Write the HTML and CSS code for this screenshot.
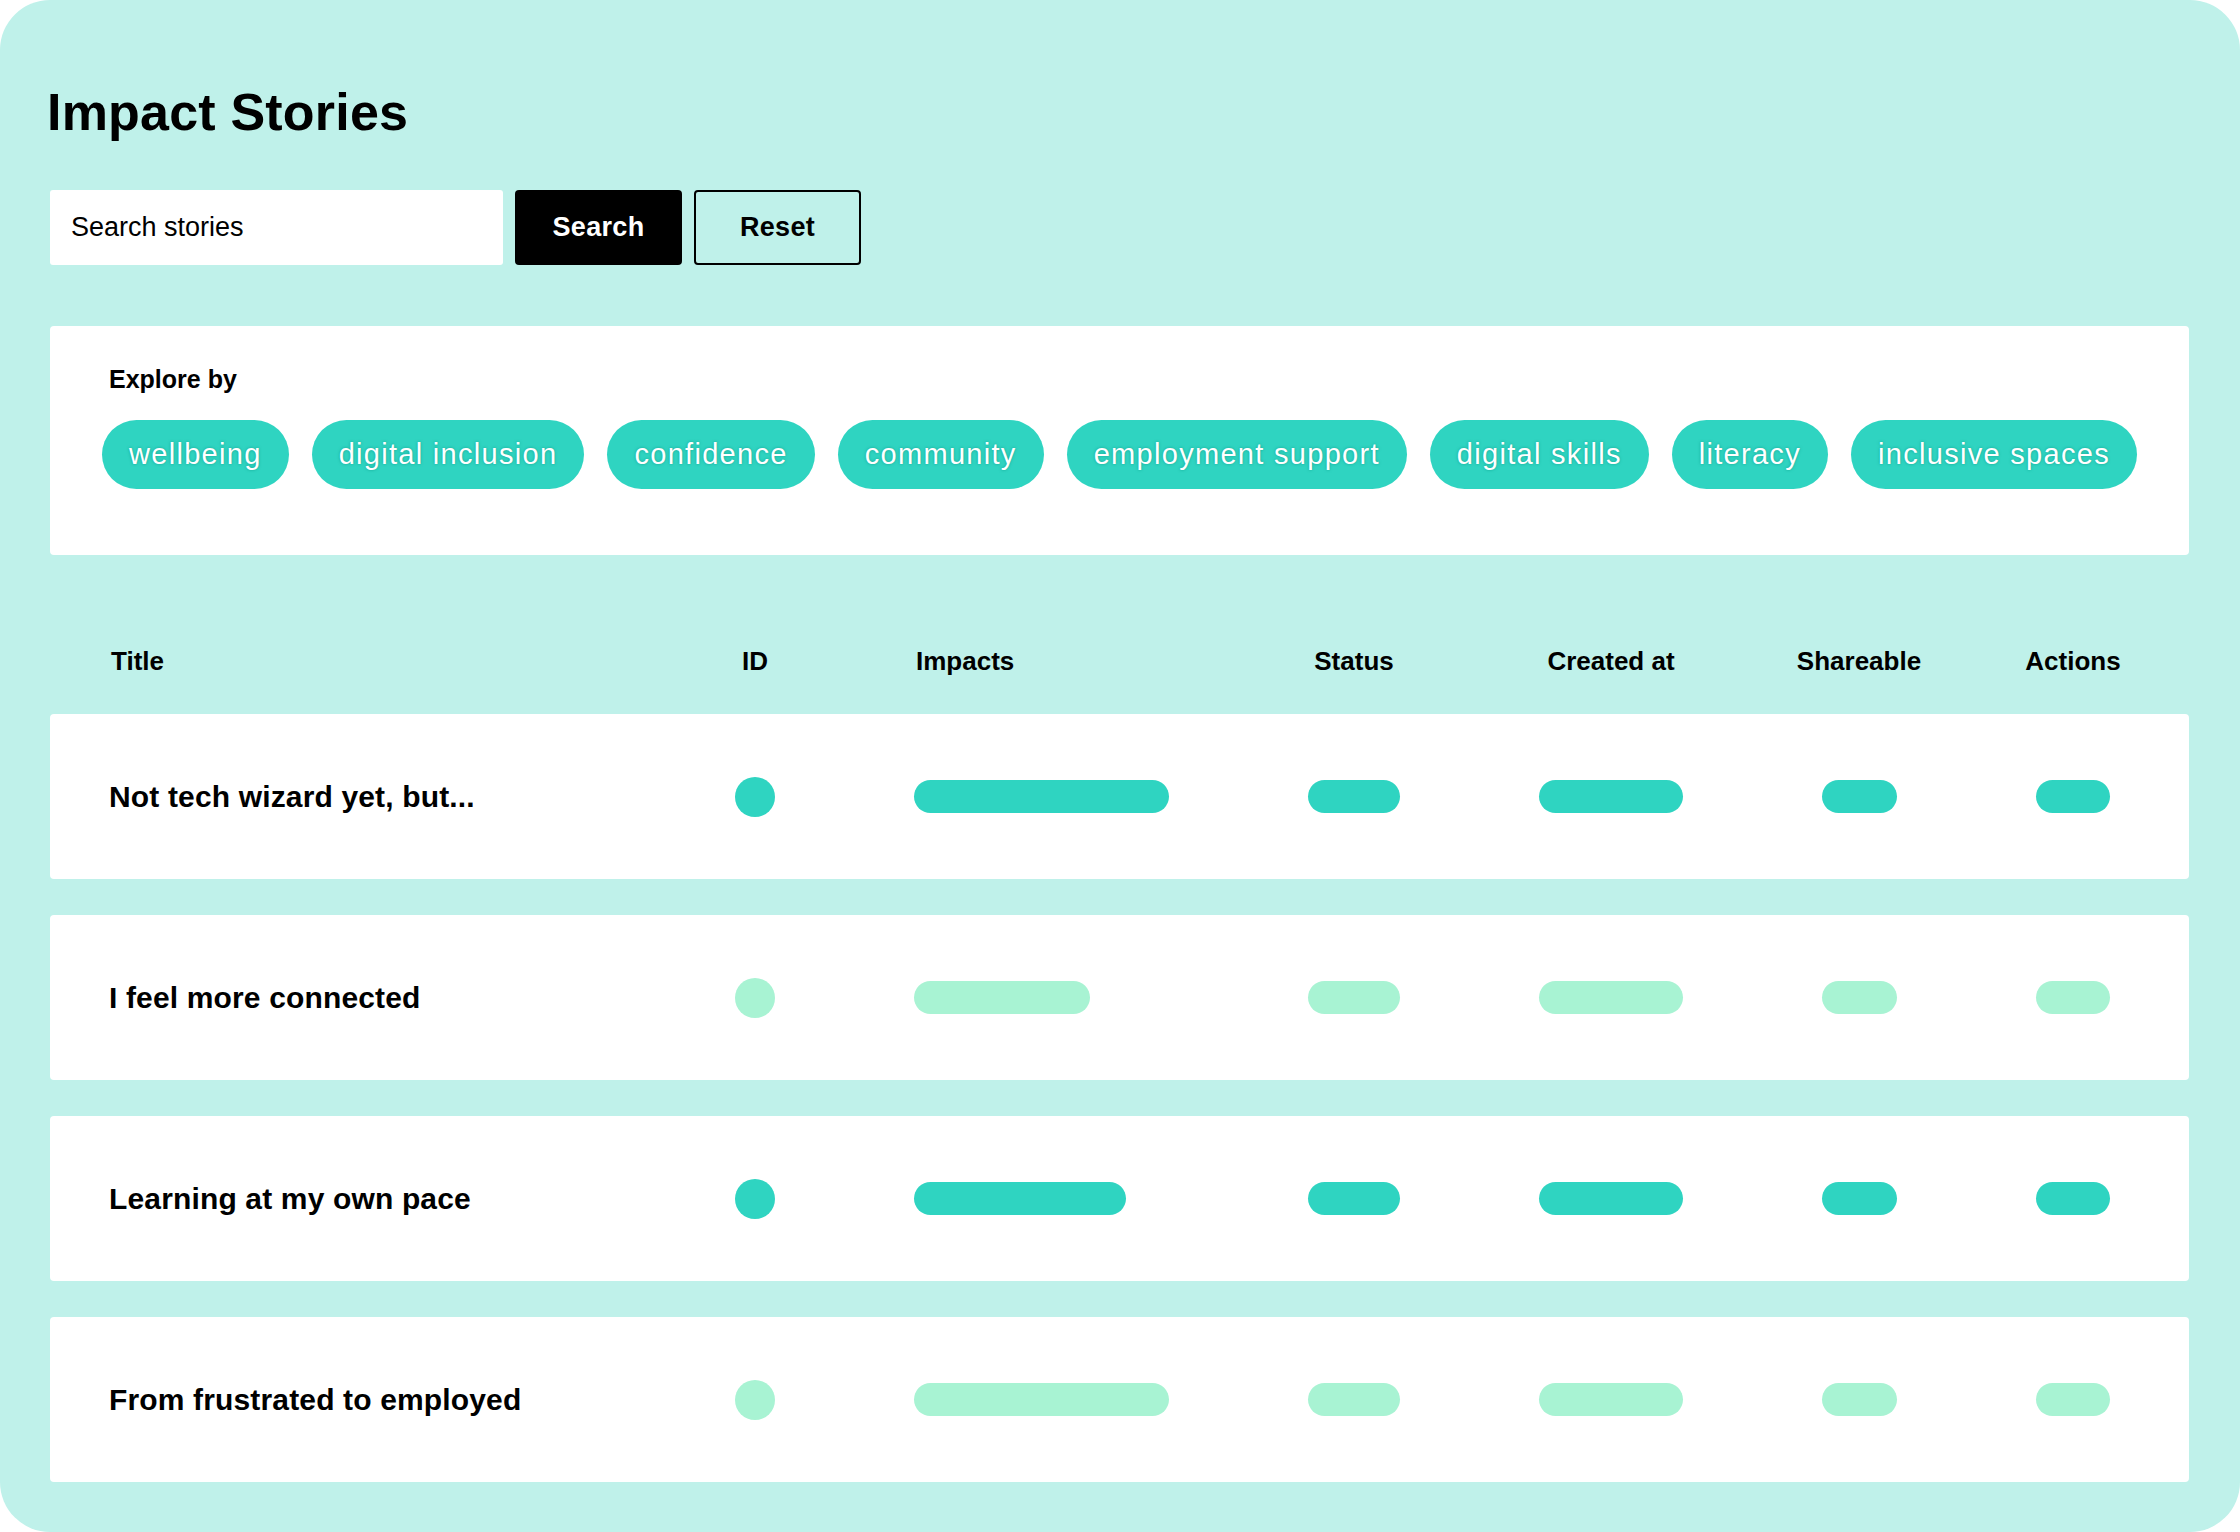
FILE: index.html
```html
<!DOCTYPE html>
<html lang="en">
<head>
<meta charset="utf-8">
<title>Impact Stories</title>
<link rel="stylesheet" href="styles.css">
</head>
<body>
<main class="page">
  <h1 class="page-title">Impact Stories</h1>

  <form class="search-bar">
    <input class="search-input" type="text" placeholder="Search stories">
    <button class="btn btn-primary" type="button">Search</button>
    <button class="btn btn-outline" type="button">Reset</button>
  </form>

  <section class="explore">
    <h2 class="explore-label">Explore by</h2>
    <div class="chips">
      <span class="chip">wellbeing</span>
      <span class="chip">digital inclusion</span>
      <span class="chip">confidence</span>
      <span class="chip">community</span>
      <span class="chip">employment support</span>
      <span class="chip">digital skills</span>
      <span class="chip">literacy</span>
      <span class="chip">inclusive spaces</span>
    </div>
  </section>

  <section class="stories">
    <div class="grid-row table-head">
      <div class="cell cell-title">Title</div>
      <div class="cell cell-center">ID</div>
      <div class="cell cell-impacts">Impacts</div>
      <div class="cell cell-center">Status</div>
      <div class="cell cell-center">Created at</div>
      <div class="cell cell-center">Shareable</div>
      <div class="cell cell-center">Actions</div>
    </div>

    <div class="grid-row story">
      <div class="cell cell-title story-title">Not tech wizard yet, but...</div>
      <div class="cell cell-center"><span class="dot dark"></span></div>
      <div class="cell cell-impacts"><span class="bar dark" style="width:255px"></span></div>
      <div class="cell cell-center"><span class="bar dark w-status"></span></div>
      <div class="cell cell-center"><span class="bar dark w-created"></span></div>
      <div class="cell cell-center"><span class="bar dark w-share"></span></div>
      <div class="cell cell-center"><span class="bar dark w-actions"></span></div>
    </div>

    <div class="grid-row story">
      <div class="cell cell-title story-title">I feel more connected</div>
      <div class="cell cell-center"><span class="dot light"></span></div>
      <div class="cell cell-impacts"><span class="bar light" style="width:176px"></span></div>
      <div class="cell cell-center"><span class="bar light w-status"></span></div>
      <div class="cell cell-center"><span class="bar light w-created"></span></div>
      <div class="cell cell-center"><span class="bar light w-share"></span></div>
      <div class="cell cell-center"><span class="bar light w-actions"></span></div>
    </div>

    <div class="grid-row story">
      <div class="cell cell-title story-title">Learning at my own pace</div>
      <div class="cell cell-center"><span class="dot dark"></span></div>
      <div class="cell cell-impacts"><span class="bar dark" style="width:212px"></span></div>
      <div class="cell cell-center"><span class="bar dark w-status"></span></div>
      <div class="cell cell-center"><span class="bar dark w-created"></span></div>
      <div class="cell cell-center"><span class="bar dark w-share"></span></div>
      <div class="cell cell-center"><span class="bar dark w-actions"></span></div>
    </div>

    <div class="grid-row story">
      <div class="cell cell-title story-title">From frustrated to employed</div>
      <div class="cell cell-center"><span class="dot light"></span></div>
      <div class="cell cell-impacts"><span class="bar light" style="width:255px"></span></div>
      <div class="cell cell-center"><span class="bar light w-status"></span></div>
      <div class="cell cell-center"><span class="bar light w-created"></span></div>
      <div class="cell cell-center"><span class="bar light w-share"></span></div>
      <div class="cell cell-center"><span class="bar light w-actions"></span></div>
    </div>
  </section>
</main>
</body>
</html>
```

FILE: styles.css
```css
* {
  box-sizing: border-box;
}

html, body {
  margin: 0;
  padding: 0;
  background: #ffffff;
}

body {
  font-family: "Liberation Sans", Arial, Helvetica, sans-serif;
  color: #000000;
}

.page {
  width: 2240px;
  min-height: 1532px;
  background: #bff1ea;
  border-radius: 50px;
  padding: 81px 51px 50px 50px;
}

.page-title {
  margin: 0 0 0 -3px;
  font-size: 52px;
  line-height: 62px;
  font-weight: 700;
  letter-spacing: 0.2px;
}

.search-bar {
  display: flex;
  gap: 12px;
  margin-top: 47px;
  height: 75px;
}

.search-input {
  width: 453px;
  height: 75px;
  border: none;
  border-radius: 3px;
  background: #ffffff;
  padding: 0 21px;
  font-family: inherit;
  font-size: 27px;
  color: #000;
  outline: none;
}

.search-input::placeholder {
  color: #000;
  opacity: 1;
}

.btn {
  width: 167px;
  height: 75px;
  border-radius: 4px;
  font-family: inherit;
  font-size: 27px;
  font-weight: 700;
  letter-spacing: 0.3px;
  cursor: pointer;
}

.btn-primary {
  background: #000000;
  color: #ffffff;
  border: none;
}

.btn-outline {
  background: transparent;
  color: #000000;
  border: 2px solid #000000;
}

.explore {
  margin-top: 61px;
  background: #ffffff;
  border-radius: 4px;
  padding: 38px 52px 66px 52px;
}

.explore-label {
  margin: 0 0 26px 7px;
  font-size: 25px;
  line-height: 30px;
  font-weight: 700;
}

.chips {
  display: flex;
  justify-content: space-between;
  align-items: center;
}

.chip {
  display: inline-flex;
  align-items: center;
  height: 69px;
  padding: 0 27px;
  border-radius: 35px;
  background: #2fd4c1;
  color: #ffffff;
  font-size: 29px;
  letter-spacing: 1.3px;
  white-space: nowrap;
  text-shadow: 0 0 3px rgba(10, 150, 130, 0.75);
}

.grid-row {
  display: grid;
  grid-template-columns: 596px 100px 409px 280px 234px 262px 166px;
  align-items: center;
  padding: 0 33px 0 59px;
}

.table-head {
  padding-top: 91px;
  padding-bottom: 38px;
  font-size: 26px;
  line-height: 30px;
  font-weight: 700;
}

.table-head .cell-title {
  padding-left: 2px;
}

.cell-center {
  display: flex;
  justify-content: center;
}

.cell-impacts {
  display: flex;
  padding-left: 109px;
}

.table-head .cell-impacts {
  padding-left: 111px;
}

.story {
  height: 165px;
  margin-bottom: 36px;
  background: #ffffff;
  border-radius: 4px;
}

.story:last-child {
  margin-bottom: 0;
}

.story-title {
  font-size: 30px;
  font-weight: 700;
  letter-spacing: 0.15px;
}

.dot {
  display: block;
  width: 40px;
  height: 40px;
  border-radius: 50%;
}

.bar {
  display: block;
  height: 33px;
  border-radius: 17px;
}

.dark {
  background: #2fd4c1;
}

.light {
  background: #a8f3d3;
}

.w-status {
  width: 92px;
}

.w-created {
  width: 144px;
}

.w-share {
  width: 75px;
}

.w-actions {
  width: 74px;
}
```
